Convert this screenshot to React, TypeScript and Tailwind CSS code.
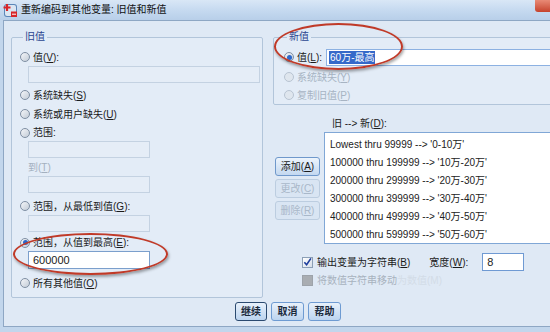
import React from "react";

const FONT = { fontFamily: '"Liberation Sans", "Noto Sans CJK SC", sans-serif' };

function Key({ k }: { k: string }) {
  return (
    <>
      (<span className="underline">{k}</span>)
    </>
  );
}

function Radio({ checked = false, disabled = false }: { checked?: boolean; disabled?: boolean }) {
  return (
    <span
      className={
        "w-[10px] h-[10px] rounded-full border flex items-center justify-center flex-shrink-0 " +
        (disabled
          ? "border-[#b8c4d2] bg-[#dfe6ee]"
          : "border-[#7f8fa3] bg-gradient-to-br from-[#f4f6f9] to-[#c3ccd7]")
      }
    >
      {checked && <span className="w-[5px] h-[5px] rounded-full bg-[#2c68cc]" />}
    </span>
  );
}

function Field({ w, h = 17, active = false, children }: { w: number | string; h?: number; active?: boolean; children?: React.ReactNode }) {
  return (
    <div
      className={
        "flex items-center px-[4px] border " +
        (active ? "bg-white border-[#7b9fcc]" : "bg-[#e5edf7] border-[#c4d2e2]")
      }
      style={{ width: w, height: h }}
    >
      {children}
    </div>
  );
}

function SideBtn({ label, k, disabled = false }: { label: string; k: string; disabled?: boolean }) {
  return (
    <div
      className={
        "w-[45px] h-[19px] rounded-[3px] border flex items-center justify-center whitespace-nowrap " +
        (disabled
          ? "border-[#bccde0] bg-[#d9e5f3] text-[#a9b8c9]"
          : "border-[#6f98cb] bg-gradient-to-b from-[#edf4fc] to-[#c3d8f0] text-[#1b1b1b]")
      }
    >
      {label}
      <Key k={k} />
    </div>
  );
}

function DlgBtn({ label, main = false }: { label: string; main?: boolean }) {
  return (
    <div
      className={
        "h-[19px] rounded-[3px] border flex items-center justify-center whitespace-nowrap font-bold bg-gradient-to-b from-[#e8f1fb] to-[#bcd4ef] text-[#1b2a3c] " +
        (main ? "border-[#2b4a70] w-[32px]" : "border-[#6e9bd2] w-[33px]")
      }
    >
      {label}
    </div>
  );
}

const MAPPINGS = [
  "Lowest thru 99999 --> '0-10万'",
  "100000 thru 199999 --> '10万-20万'",
  "200000 thru 299999 --> '20万-30万'",
  "300000 thru 399999 --> '30万-40万'",
  "400000 thru 499999 --> '40万-50万'",
  "500000 thru 599999 --> '50万-60万'",
];

export default function App() {
  return (
    <div
      className="relative w-[550px] h-[332px] overflow-hidden bg-[#c2d6ec] text-[10px] text-[#1b1b1b] flex flex-col"
      style={FONT}
    >
      {/* Title bar */}
      <div className="h-[20px] flex items-center bg-gradient-to-b from-[#d9e7f6] via-[#c6daf0] to-[#b8cfe9] flex-shrink-0">
        <svg width="15" height="15" viewBox="0 0 15 15" className="ml-[3px] mr-[3px]">
          <rect x="1" y="1" width="13" height="13" rx="3" fill="#5b86b8" />
          <rect x="2" y="2" width="11" height="11" rx="2" fill="#dbe6f2" />
          <path d="M4 1v7M0.5 4.5h7" stroke="#d8262a" strokeWidth="2.2" />
          <rect x="8" y="8.5" width="6" height="5.5" fill="#d8262a" />
          <path d="M9 11.2h4" stroke="#fff" strokeWidth="1" />
        </svg>
        <span className="leading-none text-[#111]">重新编码到其他变量: 旧值和新值</span>
        <div className="ml-auto self-start w-[15px] h-[12px] rounded-bl-[3px] bg-gradient-to-b from-[#e88a76] to-[#c5412b]" />
      </div>

      {/* Dialog body */}
      <div className="ml-[3px] w-[575px] h-[307px] border border-[#8ea7c4] bg-[#dfe9f5] flex flex-col flex-shrink-0 pl-[7px] pt-[10px]">
        <div className="flex">
          {/* Old value */}
          <fieldset className="w-[252px] h-[267px] border border-[#b2c5da] rounded-[2px] flex flex-col pl-[8px] pt-[5px] bg-[#e3ecf7]">
            <legend className="ml-[3px] px-[2px] leading-[12px] text-[#2b4590]">旧值</legend>
            <div className="h-[18px] flex items-center gap-[3px]">
              <Radio />
              <span>
                值<Key k="V" />:
              </span>
            </div>
            <div className="ml-[8px]">
              <Field w={232} />
            </div>
            <div className="mt-[3px] h-[18px] flex items-center gap-[3px]">
              <Radio />
              <span>
                系统缺失<Key k="S" />
              </span>
            </div>
            <div className="mt-[1px] h-[18px] flex items-center gap-[3px]">
              <Radio />
              <span>
                系统或用户缺失<Key k="U" />
              </span>
            </div>
            <div className="mt-[1px] h-[17px] flex items-center gap-[3px]">
              <Radio />
              <span>范围:</span>
            </div>
            <div className="ml-[8px]">
              <Field w={122} />
            </div>
            <div className="mt-[1px] h-[17px] flex items-center ml-[8px] text-[#a3b0bf]">
              到<Key k="T" />
            </div>
            <div className="ml-[8px]">
              <Field w={122} />
            </div>
            <div className="mt-[4px] h-[18px] flex items-center gap-[3px]">
              <Radio />
              <span>
                范围，从最低到值<Key k="G" />:
              </span>
            </div>
            <div className="ml-[8px]">
              <Field w={122} />
            </div>
            <div className="mt-[2px] h-[17px] flex items-center gap-[3px]">
              <Radio checked />
              <span>
                范围，从值到最高<Key k="E" />:
              </span>
            </div>
            <div className="ml-[8px]">
              <Field w={122} h={18} active>
                <span className="text-[11px]">600000</span>
              </Field>
            </div>
            <div className="mt-[5px] h-[18px] flex items-center gap-[3px]">
              <Radio />
              <span>
                所有其他值<Key k="O" />
              </span>
            </div>
          </fieldset>

          {/* Right column */}
          <div className="ml-[10px] flex flex-col">
            <fieldset className="w-[295px] h-[74px] border border-[#b2c5da] rounded-[2px] flex flex-col pl-[10px] bg-[#e3ecf7]">
              <legend className="ml-[3px] px-[2px] leading-[12px] text-[#2b4590]">新值</legend>
              <div className="mt-[5px] h-[18px] flex items-center">
                <Radio checked />
                <span className="ml-[3px]">
                  值<Key k="L" />:
                </span>
                <div className="ml-[4px] h-[17px] flex-1 bg-white border border-[#8cb1e2] flex items-center pl-[2px]">
                  <span className="bg-[#3569c9] text-white leading-[13px] px-[1px]">60万-最高</span>
                </div>
              </div>
              <div className="mt-[2px] h-[18px] flex items-center gap-[3px] text-[#a7b4c3]">
                <Radio disabled />
                <span>
                  系统缺失<Key k="Y" />
                </span>
              </div>
              <div className="h-[18px] flex items-center gap-[3px] text-[#a7b4c3]">
                <Radio disabled />
                <span>
                  复制旧值<Key k="P" />
                </span>
              </div>
            </fieldset>

            <div className="mt-[11px] h-[14px] flex items-center pl-[59px]">
              旧 --&gt; 新<Key k="D" />:
            </div>

            <div className="mt-[2px] flex">
              <div className="ml-[2px] pt-[25px] flex flex-col gap-[3px]">
                <SideBtn label="添加" k="A" />
                <SideBtn label="更改" k="C" disabled />
                <SideBtn label="删除" k="R" disabled />
              </div>
              <div className="ml-[4px] w-[250px] h-[112px] bg-white border border-[#80a7d6] pt-[2px] pl-[5px] flex flex-col">
                {MAPPINGS.map((m) => (
                  <div key={m} className="h-[18px] flex items-center text-[#222]">
                    {m}
                  </div>
                ))}
              </div>
            </div>

            <div className="mt-[9px] h-[18px] flex items-center">
              <span className="ml-[29px] w-[11px] h-[11px] border border-[#8b9fb6] bg-gradient-to-br from-white to-[#d6dee8] flex items-center justify-center">
                <svg width="10" height="10" viewBox="0 0 10 10">
                  <path d="M1.5 5.2L4 8L8.8 1" stroke="#1d3d9c" strokeWidth="1.8" fill="none" />
                </svg>
              </span>
              <span className="ml-[4px]">
                输出变量为字符串<Key k="B" />
              </span>
              <span className="ml-[19px]">
                宽度<Key k="W" />:
              </span>
              <div className="ml-[14px] w-[42px] h-[18px] bg-white border border-[#6f9ad3] flex items-center pl-[4px] text-[11px]">
                8
              </div>
            </div>

            <div className="mt-[2px] h-[14px] flex items-center">
              <span className="ml-[29px] w-[11px] h-[11px] border border-[#9da3aa] bg-[#a9adb2]" />
              <span className="ml-[4px] text-[#a8b2be]">将数值字符串移动</span>
              <span className="text-[#d3dce7]">为数值(M)</span>
            </div>
          </div>
        </div>

        {/* Dialog buttons */}
        <div className="mt-[4px] flex gap-[4px] pl-[224px]">
          <DlgBtn label="继续" main />
          <DlgBtn label="取消" />
          <DlgBtn label="帮助" />
        </div>
      </div>

      {/* Annotation ellipses */}
      <div className="absolute left-[13px] top-[233px] w-[155px] h-[42px] rounded-[50%] border-[2.5px] border-[#c03a28] shadow-[1px_2px_3px_rgba(0,0,0,0.35)] pointer-events-none" />
      <div className="absolute left-[274px] top-[23px] w-[129px] h-[47px] rounded-[50%] border-[2.5px] border-[#c03a28] shadow-[1px_2px_3px_rgba(0,0,0,0.35)] pointer-events-none" />
    </div>
  );
}
